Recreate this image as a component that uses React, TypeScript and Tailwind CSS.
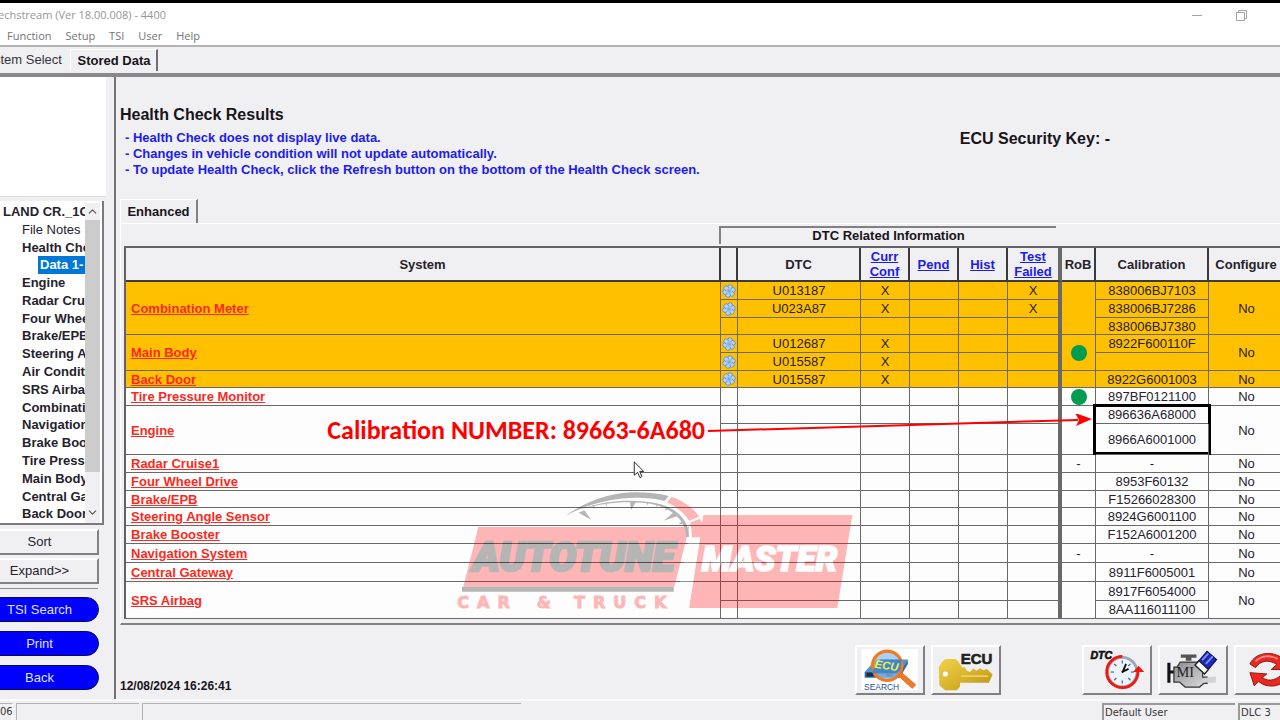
import { ReactNode } from 'react';
import clsx from 'clsx';
import { ChevronDown, ChevronUp } from 'lucide-react';

type SubRow = {
  dtc?: string;
  curr?: boolean;
  failed?: boolean;
  cal?: string;
  height: string;
};

type SystemEntry = {
  name: string;
  rob?: 'dot' | 'dash';
  alert?: boolean;
  marked?: boolean;
  rows: SubRow[];
};

const systems: SystemEntry[] = [
  {
    name: 'Combination Meter',
    alert: true,
    rows: [
      { dtc: 'U013187', curr: true, failed: true, cal: '838006BJ7103', height: 'h-[18px]' },
      { dtc: 'U023A87', curr: true, failed: true, cal: '838006BJ7286', height: 'h-[18px]' },
      { cal: '838006BJ7380', height: 'h-[17px]' },
    ],
  },
  {
    name: 'Main Body',
    alert: true,
    rob: 'dot',
    rows: [
      { dtc: 'U012687', curr: true, cal: '8922F600110F', height: 'h-[18px]' },
      { dtc: 'U015587', curr: true, height: 'h-[18px]' },
    ],
  },
  {
    name: 'Back Door',
    alert: true,
    rows: [{ dtc: 'U015587', curr: true, cal: '8922G6001003', height: 'h-[17px]' }],
  },
  { name: 'Tire Pressure Monitor', rob: 'dot', rows: [{ cal: '897BF0121100', height: 'h-[18px]' }] },
  {
    name: 'Engine',
    marked: true,
    rows: [
      { cal: '896636A68000', height: 'h-[18px]' },
      { cal: '8966A6001000', height: 'h-[31px]' },
    ],
  },
  { name: 'Radar Cruise1', rob: 'dash', rows: [{ cal: '-', height: 'h-[18px]' }] },
  { name: 'Four Wheel Drive', rows: [{ cal: '8953F60132', height: 'h-[18px]' }] },
  { name: 'Brake/EPB', rows: [{ cal: 'F15266028300', height: 'h-[17px]' }] },
  { name: 'Steering Angle Sensor', rows: [{ cal: '8924G6001100', height: 'h-[18px]' }] },
  { name: 'Brake Booster', rows: [{ cal: 'F152A6001200', height: 'h-[18px]' }] },
  { name: 'Navigation System', rob: 'dash', rows: [{ cal: '-', height: 'h-[19px]' }] },
  { name: 'Central Gateway', rows: [{ cal: '8911F6005001', height: 'h-[19px]' }] },
  {
    name: 'SRS Airbag',
    rows: [
      { cal: '8917F6054000', height: 'h-[19px]' },
      { cal: '8AA116011100', height: 'h-[18px]' },
    ],
  },
];

const tree = [
  'Engine',
  'Radar Cruise1',
  'Four Wheel Drive',
  'Brake/EPB',
  'Steering Angle Sensor',
  'Air Conditioner',
  'SRS Airbag',
  'Combination Meter',
  'Navigation System',
  'Brake Booster',
  'Tire Pressure Monitor',
  'Main Body',
  'Central Gateway',
  'Back Door',
];

function FreezeIcon() {
  return (
    <svg viewBox="0 0 14 14" className="mx-auto block h-[14px] w-[14px]">
      {[0, 60, 120, 180, 240, 300].map((angle) => (
        <circle
          key={angle}
          cx="7"
          cy="3"
          r="2.4"
          fill="#b4d4f8"
          stroke="#5f8ccb"
          strokeWidth="0.8"
          transform={`rotate(${angle + 15} 7 7)`}
        />
      ))}
      <circle cx="7" cy="7" r="3" fill="#a5c9f3" />
      <path d="M7 4.5v5M4.8 5.8l4.4 2.4M4.8 8.2l4.4-2.4" stroke="#6c97d6" strokeWidth="0.6" />
    </svg>
  );
}

function Rob({ value }: { value?: 'dot' | 'dash' }) {
  if (value === 'dot') return <span className="mx-auto block h-4 w-4 rounded-full bg-[#009c52]" />;
  return <>{value === 'dash' && '-'}</>;
}

function SortLink({ children }: { children: ReactNode }) {
  return (
    <a href="#sort" className="block text-[#1c1ced] underline">
      {children}
    </a>
  );
}

function ResultsTable() {
  const cell = 'border-b border-r border-[#6b6868] p-0';
  const head = 'border-r-2 border-b-2 border-[#3c3a3b] bg-[#f0eff1] p-0 font-bold';

  return (
    <table className="w-full table-fixed border-separate border-spacing-0 border-l-2 border-t-2 border-[#636163] text-center text-[13px] leading-[15px] text-[#26222c]">
      <colgroup>
        <col />
        <col className="w-[17px]" />
        <col className="w-[123px]" />
        <col className="w-[49px]" />
        <col className="w-[49px]" />
        <col className="w-[49px]" />
        <col className="w-[54px]" />
        <col className="w-[34px]" />
        <col className="w-[113px]" />
        <col className="w-[76px]" />
      </colgroup>
      <thead>
        <tr className="h-[34px]">
          <th className={head}>System</th>
          <th className={head} aria-label="Freeze frame" />
          <th className={head}>DTC</th>
          <th className={head}><SortLink>Curr<br />Conf</SortLink></th>
          <th className={head}><SortLink>Pend</SortLink></th>
          <th className={head}><SortLink>Hist</SortLink></th>
          <th className="border-b-2 border-r-4 border-b-[#3c3a3b] border-r-[#6b6868] bg-[#f0eff1] p-0">
            <SortLink>Test<br />Failed</SortLink>
          </th>
          <th className={head}>RoB</th>
          <th className={head}>Calibration</th>
          <th className={head}>Configure</th>
        </tr>
      </thead>
      <tbody>
        {systems.map((system) =>
          system.rows.map((row, i) => {
            const span = system.rows.length;
            return (
              <tr key={`${system.name}-${i}`} className={clsx(row.height, system.alert ? 'bg-[#ffc000]' : 'bg-[#fdfdfe]')}>
                {i === 0 && (
                  <td rowSpan={span} className={clsx(cell, 'pl-[5px] text-left font-bold')}>
                    <a href="#system" className="text-[#fa2a20] underline">{system.name}</a>
                  </td>
                )}
                <td className={cell}>{row.dtc && <FreezeIcon />}</td>
                <td className={cell}>{row.dtc}</td>
                <td className={cell}>{row.curr && 'X'}</td>
                <td className={cell} />
                <td className={cell} />
                <td className="border-b border-r-4 border-[#6b6868] p-0">{row.failed && 'X'}</td>
                {i === 0 && (
                  <td rowSpan={span} className={cell}>
                    <Rob value={system.rob} />
                  </td>
                )}
                <td className={clsx(cell, 'relative')}>
                  {row.cal}
                  {system.marked && i === 0 && (
                    <span className="absolute -left-[3px] -right-[3px] -top-[2px] h-[51px] border-3 border-black" />
                  )}
                </td>
                {i === 0 && <td rowSpan={span} className={cell}>No</td>}
              </tr>
            );
          })
        )}
      </tbody>
    </table>
  );
}

function Watermark() {
  return (
    <svg viewBox="0 0 1290 435" className="h-[145px] w-[430px]" opacity="0.28">
      <path d="M115 141H748L703 320H70Z" fill="#f00" />
      <path d="M66 320H701V335H66Z" fill="#000" />
      <path d="M790 105H1237L1192 384H747Z" fill="#f00" />
      <path d="M748 172H781L747 384H703Z" fill="#fff" />
      <path d="M377 107C450 55 530 36 590 37C625 37 655 41 686 48L674 63C590 42 475 55 377 107Z" fill="#000" />
      <path d="M695 50C730 62 762 85 777 110L747 122C732 98 708 80 681 67Z" fill="#f00" />
      <path d="M750 128L779 116L789 132L786 172H755C756 155 754 142 750 128Z" fill="#f00" />
      <path d="M420 88C500 60 560 60 620 65C700 72 748 115 747 171H739C738 120 690 76 615 69C550 63 490 68 420 88Z" fill="#000" />
      <path d="M416 98L433 91L453 119ZM570 64H589L573 90ZM671 122L702 96L720 106ZM456 75L464 87L462 74ZM495 70L500 81L500 69ZM620 67L621 77L625 68ZM650 73L647 82L655 75ZM680 84L673 92L685 87ZM716 131L729 123L735 130L722 132Z" fill="#000" />
      <text x="98" y="273" fill="#000" stroke="#000" strokeWidth="8" fontFamily="Roboto, 'Liberation Sans', sans-serif" fontSize="121" fontWeight="900" fontStyle="italic">AUTOTUNE</text>
      <text x="785" y="274" fill="#fff" stroke="#fff" strokeWidth="5" fontFamily="Roboto, 'Liberation Sans', sans-serif" fontSize="104" fontWeight="900" fontStyle="italic">MASTER</text>
      <g fill="#f00" stroke="#f00" strokeWidth="3" fontFamily="'DejaVu Sans', sans-serif" fontSize="48" fontWeight="bold">
        <text x="52" y="384" className="tracking-[0.5em]">CAR</text>
        <text x="290" y="384">&amp;</text>
        <text x="402" y="384" className="tracking-[0.5em]">TRUCK</text>
      </g>
    </svg>
  );
}

function EcuSearchIcon() {
  return (
    <svg viewBox="0 0 210 147" className="h-full w-full">
      <path d="M14 6H194V138H14Z" fill="#fff" />
      <path d="M24 80L60 40H162L136 80Z" fill="#4c93d8" />
      <path d="M24 80H136V98H24ZM136 80L162 40V54L136 98Z" fill="#2f6ba9" />
      <path d="M30 82H52V94H30ZM92 82H114V94H92Z" fill="#1c2b3c" />
      <circle cx="96" cy="60" r="47" fill="#8fc0ec" fillOpacity="0.75" stroke="#f27a20" strokeWidth="10" />
      <path d="M48 78L74 40H142L138 74L126 84H48Z" fill="#3f86cc" />
      <path d="M132 92L176 132L187 121L142 82Z" fill="#f27a20" stroke="#e0691a" strokeWidth="3" />
      <text x="56" y="72" fill="#f5ee3a" fontFamily="'Liberation Sans', sans-serif" fontSize="36" fontWeight="bold" fontStyle="italic" transform="rotate(8 96 60)">ECU</text>
      <text x="22" y="136" fill="#24518e" fontFamily="'Liberation Sans', sans-serif" fontSize="27">SEARCH</text>
    </svg>
  );
}

function EcuKeyIcon() {
  return (
    <svg viewBox="0 0 210 147" className="h-full w-full">
      <defs>
        <linearGradient id="gold" x1="0" y1="0" x2="1" y2="1">
          <stop offset="0" stopColor="#f0d24b" />
          <stop offset="0.5" stopColor="#d9b52e" />
          <stop offset="1" stopColor="#b8901a" />
        </linearGradient>
      </defs>
      <path d="M18 64L28 48Q34 38 46 38H68Q78 40 85 54L94 66L100 64L108 76L118 80L128 68L138 76L150 68L160 74L172 70L190 88L178 114H86V126L76 138H38L20 122Z" fill="url(#gold)" />
      <path d="M90 93H176" stroke="#f5e07a" strokeWidth="4" />
      <circle cx="39" cy="86" r="8" fill="#fff" />
      <text x="88" y="54" fill="#222" stroke="#222" strokeWidth="2" fontFamily="'Liberation Sans', sans-serif" fontSize="48" fontWeight="bold">ECU</text>
    </svg>
  );
}

function DtcClockIcon() {
  return (
    <svg viewBox="0 0 210 147" className="h-full w-full">
      <circle cx="122" cy="80" r="47" fill="#eef4fa" stroke="#9aa7b8" strokeWidth="9" />
      <path d="M122 30A50 50 0 1 0 172 78" fill="none" stroke="#f3170f" strokeWidth="9" />
      <path d="M156 80L174 60L192 80Z" fill="#f3170f" />
      {[0, 45, 90, 135, 180, 225, 270, 315].map((angle) => (
        <path key={angle} d="M122 43V53" stroke="#2f6fae" strokeWidth="4" transform={`rotate(${angle} 122 80)`} />
      ))}
      <path d="M122 82L134 54M120 80L142 70" stroke="#111" strokeWidth="6" />
      <text x="20" y="39" fill="#111" stroke="#111" strokeWidth="2" fontFamily="'Liberation Sans', sans-serif" fontSize="34" fontWeight="bold" fontStyle="italic">DTC</text>
    </svg>
  );
}

function MilEraseIcon() {
  return (
    <svg viewBox="0 0 210 147" className="h-full w-full">
      <defs>
        <linearGradient id="metal" x1="0" y1="0" x2="1" y2="1">
          <stop offset="0" stopColor="#8c8c8e" />
          <stop offset="1" stopColor="#dcdcde" />
        </linearGradient>
      </defs>
      <path d="M66 24H116V34H100V44H82V34H66Z" fill="#555" />
      <path d="M28 50V114M32 80H44" stroke="#111" strokeWidth="10" />
      <path d="M44 64H54L64 48H124L136 64V96H150V116H140L126 128H80L62 112H44Z" fill="url(#metal)" stroke="#333" strokeWidth="4" />
      <path d="M144 98L178 94V114H148" fill="#d2d2d4" />
      <text x="52" y="96" fill="#222" fontFamily="'Liberation Serif', serif" fontSize="46">MI</text>
      <path d="M112 58L150 14L180 40L142 86Z" fill="#1e2bb8" stroke="#0a1168" strokeWidth="4" />
      <path d="M112 58L124 44L154 72L142 86Z" fill="#fff" stroke="#222" strokeWidth="4" />
      <path d="M134 42L154 20M146 54L168 30" stroke="#7f8cf5" strokeWidth="6" />
    </svg>
  );
}

function RefreshIcon() {
  return (
    <svg viewBox="0 0 210 147" className="h-full w-full">
      <g fill="#e8291f" stroke="#8d1410" strokeWidth="3" strokeLinejoin="round">
        <path d="M44 54C62 16 118 10 150 38L162 26V72H112L130 56C104 38 76 44 62 66Z" />
        <path d="M168 90C150 130 98 134 72 110L58 124L44 82L98 86L84 98C106 114 134 104 150 82Z" />
      </g>
      <path d="M62 46C80 28 108 24 132 38" fill="none" stroke="#f88" strokeWidth="6" />
    </svg>
  );
}

function ToolButton({ label, children }: { label: string; children: ReactNode }) {
  return (
    <button
      type="button"
      aria-label={label}
      className="h-[50px] w-[70px] shrink-0 border-2 border-b-[#828082] border-r-[#828082] border-l-white border-t-white bg-[#f0eff1]"
    >
      {children}
    </button>
  );
}

function SideButton({ pill, children }: { pill?: boolean; children: ReactNode }) {
  return (
    <button
      type="button"
      className={clsx(
        '-ml-5 w-[119px] text-[13px]',
        pill
          ? 'h-[25px] rounded-full border border-[#0a0a50] bg-[#0000ff] text-[#dfe0ff]'
          : 'h-[26px] border-2 border-b-[#828082] border-r-[#828082] border-l-white border-t-white bg-[#f0eff1] text-[#26222c]'
      )}
    >
      {children}
    </button>
  );
}

function Sidebar() {
  return (
    <aside className="w-[114px] shrink-0 overflow-hidden">
      <div className="mr-2 h-[120px] border-b border-[#dcdcdc] bg-white" />
      <div className="mt-1 mr-[10px] flex h-[324px] border-b-2 border-r-2 border-[#7c7a7c] bg-white pt-[2px]">
        <ul className="flex w-[85px] flex-col overflow-hidden whitespace-nowrap text-[13px] font-bold leading-[17px] text-[#26222c]">
          <li className="flex-1 pl-[3px]">LAND CR._1G</li>
          <li className="flex-1 pl-[22px] font-normal">File Notes</li>
          <li className="flex-1 pl-[22px]">Health Check</li>
          <li className="ml-[38px] flex-1 bg-[#0078d7] pl-[2px] text-white">Data 1-</li>
          {tree.map((name) => (
            <li key={name} className="flex-1 pl-[22px]">{name}</li>
          ))}
        </ul>
        <div className="flex w-[15px] flex-col items-center bg-[#f0eff1] text-[#555]">
          <ChevronUp size={13} className="my-[2px]" />
          <div className="h-[252px] w-full bg-[#cdcccd]" />
          <ChevronDown size={13} className="mt-auto mb-1" />
        </div>
      </div>
      <div className="mt-1 flex flex-col items-start gap-[3px]">
        <SideButton>Sort</SideButton>
        <SideButton>Expand&gt;&gt;</SideButton>
      </div>
      <hr className="mt-1 mr-4 border-[#8e8c8e]" />
      <div className="mt-2 flex flex-col items-start gap-[9px]">
        <SideButton pill>TSI Search</SideButton>
        <SideButton pill>Print</SideButton>
        <SideButton pill>Back</SideButton>
      </div>
    </aside>
  );
}

function Results() {
  return (
    <section className="mt-[21px] ml-1">
      {/* Tab */}
      <div className="flex h-6">
        <button type="button" className="w-[78px] border-l border-r-2 border-t border-l-white border-r-[#828082] border-t-white text-[13px] font-bold">
          Enhanced
        </button>
      </div>
      <div className="border-b-2 border-l border-t border-b-[#828082] border-l-white border-t-white pt-[2px] pb-1 pl-[3px]">
        <div className="flex justify-end pr-[224px]">
          <div className="h-[18px] w-[337px] border-l-2 border-t-2 border-[#828082] text-center text-[13px] font-bold leading-4">
            DTC Related Information
          </div>
        </div>
        <div className="relative mt-[2px]">
          <div className="-mr-[5px]">
            <ResultsTable />
          </div>
          <div className="absolute right-[410px] top-[234px]">
            <Watermark />
          </div>
          <div className="absolute right-[187px] top-[168px] flex items-center gap-[3px] whitespace-nowrap">
            <span className="font-[Carlito,Lato,sans-serif] text-[26px] font-bold leading-8 text-[#ff0000]">Calibration NUMBER: 89663-6A680</span>
            <svg viewBox="0 0 385 32" className="h-8 w-[385px]">
              <path d="M0 17L370 6" stroke="#f00" strokeWidth="2" />
              <path d="M384 5L367 -1L371 6L368 12Z" fill="#f00" />
            </svg>
          </div>
          <svg viewBox="0 0 12 19" className="absolute right-[635px] top-[215px] h-[18px] w-[12px]">
            <path d="M1 1V15L4.5 12L7 17.5L9 16.5L6.8 11H11Z" fill="#fff" stroke="#222" />
          </svg>
        </div>
      </div>
    </section>
  );
}

export default function App() {
  return (
    <div className="flex min-h-screen flex-col overflow-hidden bg-[#f0eff1] font-['Liberation_Sans',Arial,sans-serif] text-[#17141c]">
      <header className="border-b-2 border-t-3 border-b-[#b5b3b5] border-t-black bg-white font-['Open_Sans',sans-serif] text-[11px] text-[#757375]">
        <div className="flex h-6 items-center justify-between pr-[33px]">
          <span className="-ml-[2px] text-[#989698]">echstream (Ver 18.00.008) - 4400</span>
          <div className="flex items-center gap-[34px] text-[#a3a1a3]">
            <button type="button" aria-label="Minimize" className="h-px w-[10px] bg-current" />
            <button type="button" aria-label="Restore">
              <svg viewBox="0 0 11 11" className="h-[11px] w-[11px]" fill="none" stroke="currentColor">
                <path d="M0.5 2.5H8.5V10.5H0.5ZM2.5 2.5V0.5H10.5V8.5H8.5" />
              </svg>
            </button>
          </div>
        </div>
        <nav className="flex h-[18px] items-center gap-[14px] pl-[7px]">
          <button type="button">Function</button>
          <button type="button">Setup</button>
          <button type="button">TSI</button>
          <button type="button">User</button>
          <button type="button">Help</button>
        </nav>
      </header>

      <div className="flex h-[30px] items-start border-b-4 border-[#8a888a] pt-[2px] text-[13px]">
        <button type="button" className="-ml-[6px] h-[22px] w-[76px] text-left text-[#38353c] whitespace-nowrap">stem Select</button>
        <button type="button" className="h-[22px] w-[88px] border-l border-r-2 border-t border-l-white border-r-[#6f6d6f] border-t-white pl-px font-bold">
          Stored Data
        </button>
      </div>

      <div className="flex grow">
        <Sidebar />
        <main className="flex min-w-0 grow flex-col overflow-hidden border-l-2 border-[#737173]">
          <div className="flex items-start justify-between pt-[29px] pl-1">
            <div>
              <h1 className="text-base font-bold leading-[18px]">Health Check Results</h1>
              <ul className="mt-[6px] ml-[5px] text-[13px] font-bold leading-4 text-[#1c1ced]">
                <li>- Health Check does not display live data.</li>
                <li>- Changes in vehicle condition will not update automatically.</li>
                <li>- To update Health Check, click the Refresh button on the bottom of the Health Check screen.</li>
              </ul>
            </div>
            <p className="mt-6 mr-[170px] text-base font-bold leading-[18px]">ECU Security Key: -</p>
          </div>

          <Results />

          <div className="mt-auto flex items-end gap-[6px] pb-1 pl-1">
            <time className="grow text-[12px] font-bold">12/08/2024 16:26:41</time>
            <ToolButton label="Search"><EcuSearchIcon /></ToolButton>
            <ToolButton label="Key"><EcuKeyIcon /></ToolButton>
            <div className="-mr-6 ml-[75px] flex gap-[6px]">
              <ToolButton label="Freeze frame time"><DtcClockIcon /></ToolButton>
              <ToolButton label="Clear codes"><MilEraseIcon /></ToolButton>
              <ToolButton label="Refresh"><RefreshIcon /></ToolButton>
            </div>
          </div>
        </main>
      </div>

      <footer className="flex h-[21px] gap-[3px] border-t-2 border-[#fafafa] pt-[2px] font-['DejaVu_Sans',sans-serif] text-[10px] leading-4 text-[#38353c]">
        <div className="w-[13px] border-r border-t border-[#b5b3b5] border-r-white">06</div>
        <div className="w-[123px] border-l border-t border-[#b5b3b5]" />
        <div className="w-[379px] border-l border-t border-[#b5b3b5]" />
        <div className="ml-auto w-[133px] border-l-2 border-t-2 border-[#9b999b] pl-px">Default User</div>
        <div className="w-[42px] border-l-2 border-t-2 border-[#9b999b] pl-px">DLC 3</div>
      </footer>
    </div>
  );
}
